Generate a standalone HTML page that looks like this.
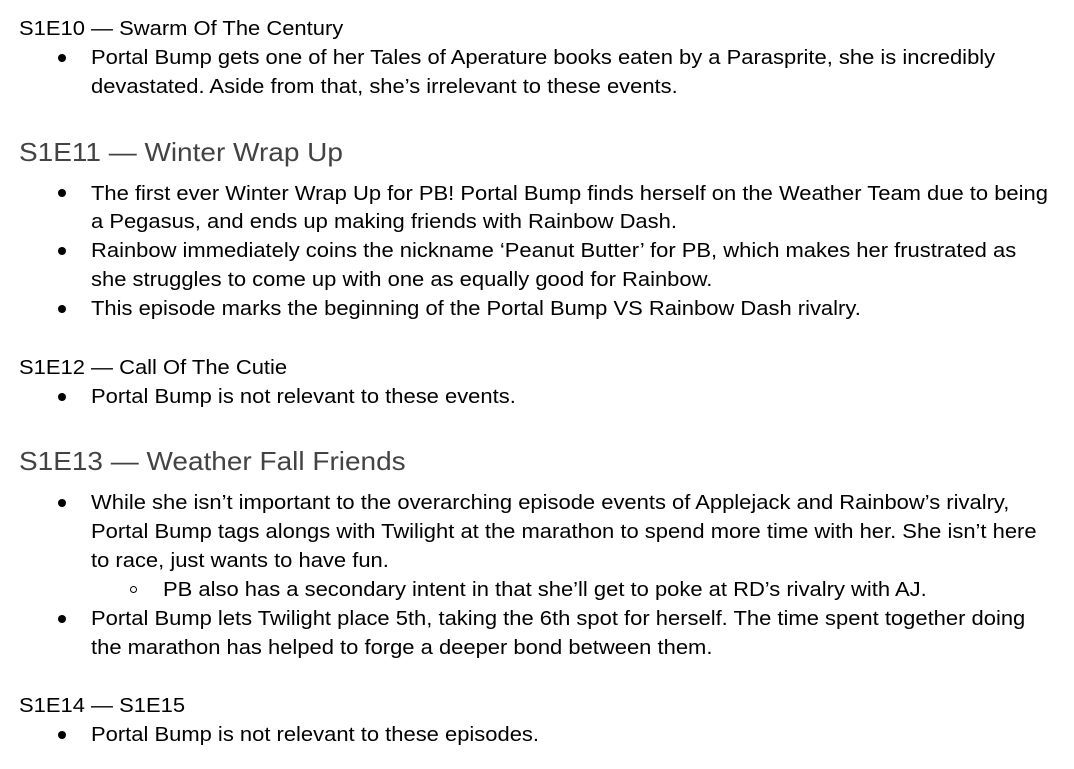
<!DOCTYPE html>
<html><head><meta charset="utf-8"><style>
body{margin:0;background:#fff;width:1074px;height:769px;overflow:hidden;position:relative;font-family:"Liberation Sans",Arial,sans-serif;color:#000}
.l{position:absolute;font-size:20px;line-height:28px;white-space:nowrap;transform:scaleX(1.098);transform-origin:0 0}
.h{position:absolute;font-size:26px;line-height:34px;color:#434343;white-space:nowrap;transform:scaleX(1.076);transform-origin:0 0}
.b{position:absolute;width:8px;height:8px;border-radius:50%;background:#000}
.c{position:absolute;width:7px;height:7px;border-radius:50%;border:1.3px solid #000;box-sizing:border-box}
</style></head><body>
<div class="l" style="left:19px;top:15px">S1E10 — Swarm Of The Century</div>
<div class="b" style="left:58px;top:54px"></div>
<div class="l" style="left:91px;top:44px">Portal Bump gets one of her Tales of Aperature books eaten by a Parasprite, she is incredibly</div>
<div class="l" style="left:91px;top:73px">devastated. Aside from that, she’s irrelevant to these events.</div>

<div class="h" style="left:19px;top:135px">S1E11 — Winter Wrap Up</div>
<div class="b" style="left:58px;top:189px"></div>
<div class="l" style="left:91px;top:180px">The first ever Winter Wrap Up for PB! Portal Bump finds herself on the Weather Team due to being</div>
<div class="l" style="left:91px;top:208px">a Pegasus, and ends up making friends with Rainbow Dash.</div>
<div class="b" style="left:58px;top:247px"></div>
<div class="l" style="left:91px;top:237px">Rainbow immediately coins the nickname ‘Peanut Butter’ for PB, which makes her frustrated as</div>
<div class="l" style="left:91px;top:266px">she struggles to come up with one as equally good for Rainbow.</div>
<div class="b" style="left:58px;top:305px"></div>
<div class="l" style="left:91px;top:295px">This episode marks the beginning of the Portal Bump VS Rainbow Dash rivalry.</div>

<div class="l" style="left:19px;top:354px">S1E12 — Call Of The Cutie</div>
<div class="b" style="left:58px;top:393px"></div>
<div class="l" style="left:91px;top:383px">Portal Bump is not relevant to these events.</div>

<div class="h" style="left:19px;top:444px">S1E13 — Weather Fall Friends</div>
<div class="b" style="left:58px;top:499px"></div>
<div class="l" style="left:91px;top:489px">While she isn’t important to the overarching episode events of Applejack and Rainbow’s rivalry,</div>
<div class="l" style="left:91px;top:518px">Portal Bump tags alongs with Twilight at the marathon to spend more time with her. She isn’t here</div>
<div class="l" style="left:91px;top:547px">to race, just wants to have fun.</div>
<div class="c" style="left:130px;top:586px"></div>
<div class="l" style="left:163px;top:576px">PB also has a secondary intent in that she’ll get to poke at RD’s rivalry with AJ.</div>
<div class="b" style="left:58px;top:615px"></div>
<div class="l" style="left:91px;top:605px">Portal Bump lets Twilight place 5th, taking the 6th spot for herself. The time spent together doing</div>
<div class="l" style="left:91px;top:634px">the marathon has helped to forge a deeper bond between them.</div>

<div class="l" style="left:19px;top:692px">S1E14 — S1E15</div>
<div class="b" style="left:58px;top:731px"></div>
<div class="l" style="left:91px;top:721px">Portal Bump is not relevant to these episodes.</div>
</body></html>
